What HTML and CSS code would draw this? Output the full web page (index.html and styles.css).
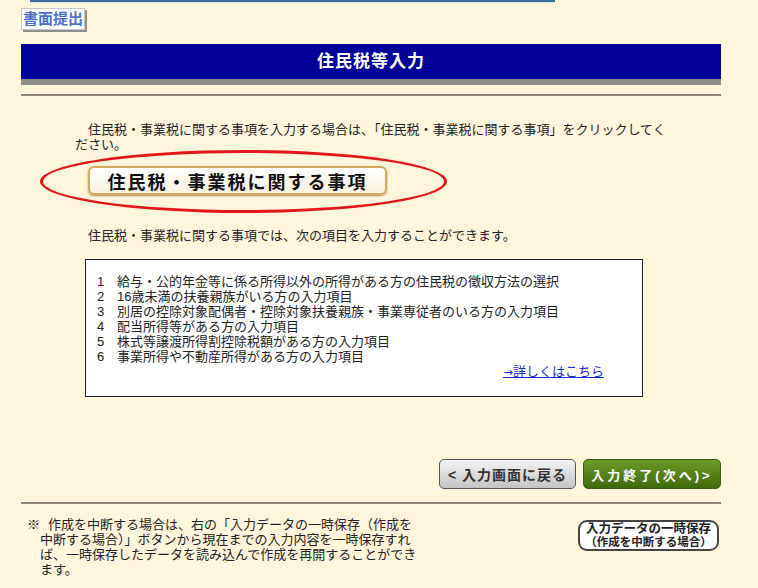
FILE: index.html
```html
<!DOCTYPE html>
<html lang="ja">
<head>
  <meta charset="UTF-8">
  <title>住民税等入力</title>
  <link rel="stylesheet" href="styles.css">
</head>
<body>
  <div class="top-edge"></div>

  <div class="page">
    <div class="mode-tag"><span>書面提出</span></div>

    <div class="title-bar">
      <h1>住民税等入力</h1>
    </div>
    <hr class="rule">

    <p class="intro">住民税・事業税に関する事項を入力する場合は、「住民税・事業税に関する事項」をクリックしてください。</p>

    <div class="mark">
      <button class="topic-btn">住民税・事業税に関する事項</button>
    </div>

    <p class="lead">住民税・事業税に関する事項では、次の項目を入力することができます。</p>

    <div class="item-box">
      <ol class="items">
        <li><span class="num">1</span>給与・公的年金等に係る所得以外の所得がある方の住民税の徴収方法の選択</li>
        <li><span class="num">2</span>16歳未満の扶養親族がいる方の入力項目</li>
        <li><span class="num">3</span>別居の控除対象配偶者・控除対象扶養親族・事業専従者のいる方の入力項目</li>
        <li><span class="num">4</span>配当所得等がある方の入力項目</li>
        <li><span class="num">5</span>株式等譲渡所得割控除税額がある方の入力項目</li>
        <li><span class="num">6</span>事業所得や不動産所得がある方の入力項目</li>
      </ol>
      <div class="more"><a href="#"><span class="arrow">→</span>詳しくはこちら</a></div>
    </div>

    <div class="nav">
      <button class="btn-back">&lt; 入力画面に戻る</button>
      <button class="btn-next">入力終了(次へ)&gt;</button>
    </div>
    <hr class="rule rule-low">

    <div class="footer">
      <p class="note"><span class="kome">※</span>作成を中断する場合は、右の「入力データの一時保存（作成を<br>中断する場合）」ボタンから現在までの入力内容を一時保存すれ<br>ば、一時保存したデータを読み込んで作成を再開することができ<br>ます。</p>
      <button class="btn-save">入力データの一時保存<br><span>（作成を中断する場合）</span></button>
    </div>
  </div>
</body>
</html>
```

FILE: styles.css
```css
body {
  margin: 0;
  background: #fff6dc;
  color: #222;
  font-family: "Liberation Sans", "Noto Sans CJK JP", sans-serif;
  font-size: 13px;
  line-height: 15px;
}

.top-edge {
  margin-left: 30px;
  width: 525px;
  height: 2px;
  background: #3f6f9f;
  border-bottom: 1px solid #d8e4ec;
}

.page {
  width: 700px;
  margin-left: 21px;
}

.mode-tag {
  margin-top: 5px;
  display: flex;
}

.mode-tag span {
  background: #fff;
  border: 1px solid #c8c8c8;
  box-shadow: 2px 2px 0 #8f8f8f;
  color: #4f6fcf;
  font-weight: bold;
  font-size: 15px;
  line-height: 20px;
  padding: 0 1px;
}

.title-bar {
  margin-top: 14px;
  background: #000099;
  border-bottom: 6px solid #8f8f8c;
  height: 35px;
  display: flex;
  align-items: center;
  justify-content: center;
}

.title-bar h1 {
  margin: 0;
  color: #fff;
  font-size: 17px;
  letter-spacing: 1px;
  font-weight: bold;
}

.rule {
  margin: 9px 0 0;
  border: 0;
  height: 2px;
  background: #8c8572;
}

.intro {
  margin: 26px 0 0 54px;
  width: 600px;
  text-indent: 13px;
}

.mark {
  margin: -2px 0 0 19px;
  width: 407px;
  height: 63px;
  border: 3px solid #e0181c;
  border-radius: 50%;
  padding: 13px 0 0 45px;
  box-sizing: border-box;
}

.topic-btn {
  width: 299px;
  height: 29px;
  border: 2px solid #d6a860;
  border-radius: 6px;
  background: linear-gradient(#ffffff, #fbf3e0);
  box-shadow: 0 1px 2px #b08a50;
  font-family: inherit;
  font-size: 18px;
  font-weight: bold;
  letter-spacing: 2px;
  color: #111;
  padding: 0;
}

.lead {
  margin: 15px 0 0 67px;
}

.item-box {
  margin: 16px 0 0 64px;
  width: 507px;
  background: #fff;
  border: 1px solid #222;
  padding: 14px 38px 16px 11px;
}

.items {
  margin: 0;
  padding: 0;
  list-style: none;
}

.num {
  display: inline-block;
  width: 20px;
}

.more {
  text-align: right;
}

.more a {
  color: #1a2fd0;
}

.arrow {
  font-family: "DejaVu Sans", sans-serif;
  font-size: 12px;
}

.nav {
  margin-top: 62px;
  display: flex;
  justify-content: flex-end;
  gap: 7px;
}

.nav button {
  height: 30px;
  border-radius: 5px;
  font-family: inherit;
  font-weight: bold;
  padding: 0;
}

.btn-back {
  width: 137px;
  background: linear-gradient(#f4f4f4, #c4c4c4);
  border: 1px solid #555;
  color: #333;
  font-size: 14px;
  letter-spacing: 1px;
}

.btn-next {
  width: 138px;
  background: linear-gradient(#6a9a28, #3f6c0c);
  border: 1px solid #3a5a10;
  color: #fff;
  font-size: 13px;
  letter-spacing: 3px;
}

.rule-low {
  margin-top: 13px;
}

.footer {
  display: flex;
  justify-content: space-between;
  align-items: flex-start;
}

.note {
  margin: 13px 0 0 6px;
  padding-left: 13px;
  text-indent: -13px;
  white-space: nowrap;
}

.kome {
  display: inline-block;
  width: 21px;
  text-indent: 0;
}

.btn-save {
  margin: 16px 2px 0 0;
  width: 141px;
  height: 31px;
  background: #fff;
  border: 2px solid #444;
  border-radius: 9px;
  font-family: inherit;
  font-size: 12.5px;
  font-weight: bold;
  line-height: 13px;
  color: #222;
  padding: 0;
}

.btn-save span {
  font-size: 11.5px;
}
```
